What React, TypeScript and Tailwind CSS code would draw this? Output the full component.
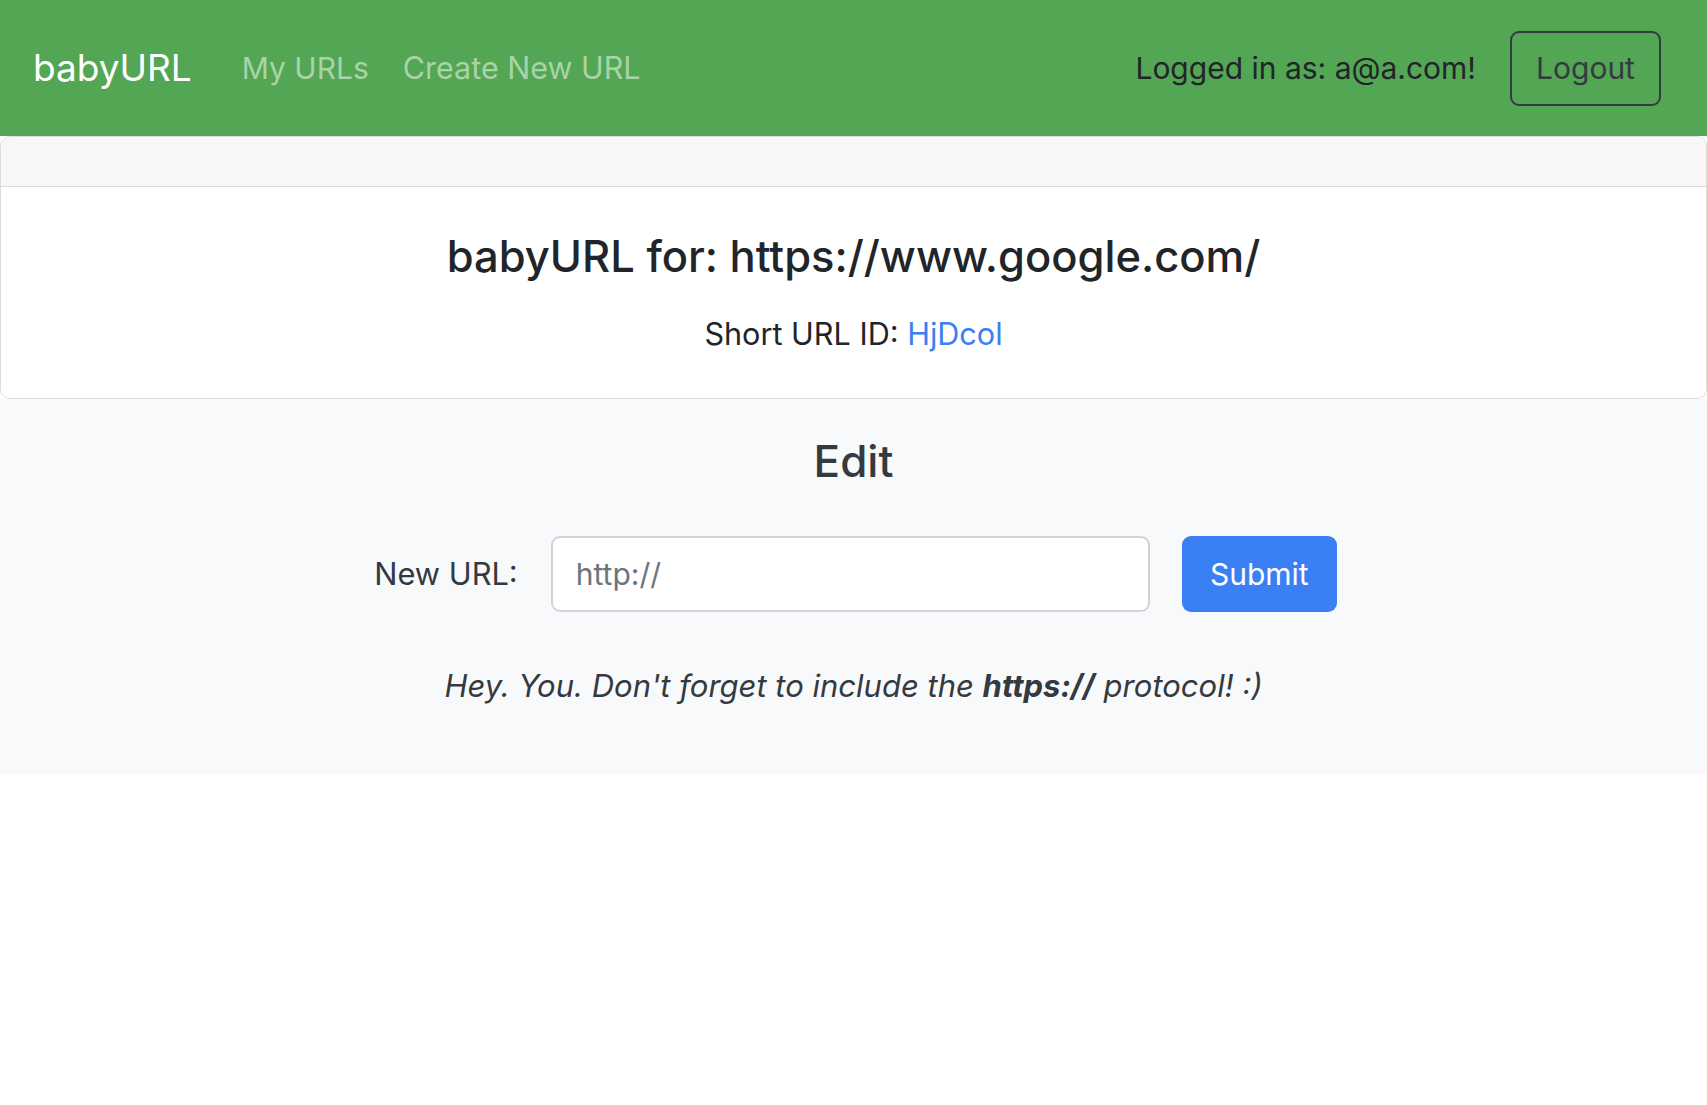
export default function App() {
  return (
    <div className="min-h-screen bg-white font-['Inter',sans-serif] text-[#212529]">
      {/* Navbar */}
      <nav className="flex h-[136px] items-center justify-between bg-[#53a653] pl-[33px] pr-[46px]">
        <div className="flex items-center">
          <span className="text-[37px] text-white">babyURL</span>
          <a className="ml-[50px] text-[30px] text-[#a9d3a9]">My URLs</a>
          <a className="ml-[34px] text-[30.5px] text-[#a9d3a9]">Create New URL</a>
        </div>
        <div className="flex items-center">
          <span className="text-[30px] text-[#212529]">Logged in as: a@a.com!</span>
          <button className="ml-[34px] flex h-[75px] w-[151px] items-center justify-center rounded-[9px] border-2 border-[#343a40] text-[30px] text-[#343a40]">
            Logout
          </button>
        </div>
      </nav>

      {/* Card */}
      <div className="overflow-hidden rounded-[10px] border border-[#dcdcdc]">
        <div className="h-[50px] border-b border-[#dcdcdc] bg-[#f7f7f7]" />
        <div className="flex h-[211px] flex-col items-center justify-center bg-white">
          <h2 className="text-[43.5px] font-medium leading-none">babyURL for: https://www.google.com/</h2>
          <p className="mt-[40px] text-[30.6px] leading-none">
            Short URL ID: <a className="text-[#3b7ff5]">HjDcol</a>
          </p>
        </div>
      </div>

      {/* Edit section */}
      <div className="flex h-[375px] flex-col items-center bg-[#f8f9fa] pt-[38px]">
        <h3 className="text-[44px] font-medium leading-[48px] text-[#343a40]">Edit</h3>
        <form className="mt-[51px] flex items-center pl-[4px]" onSubmit={(e) => e.preventDefault()}>
          <label className="text-[30.8px] text-[#343a40]">New URL:</label>
          <input
            className="ml-[33px] h-[76px] w-[599px] rounded-[9px] border-2 border-[#d0d4d9] bg-white px-[23px] text-[30px] outline-none placeholder:text-[#6c757d]"
            placeholder="http://"
          />
          <button className="ml-[32px] h-[76px] w-[155px] rounded-[9px] bg-[#3b7ff5] text-[30px] text-white">
            Submit
          </button>
        </form>
        <p className="mt-[51px] text-[31px] italic text-[#343a40]">
          Hey. You. Don't forget to include the <b>https://</b> protocol! :)
        </p>
      </div>
    </div>
  );
}
